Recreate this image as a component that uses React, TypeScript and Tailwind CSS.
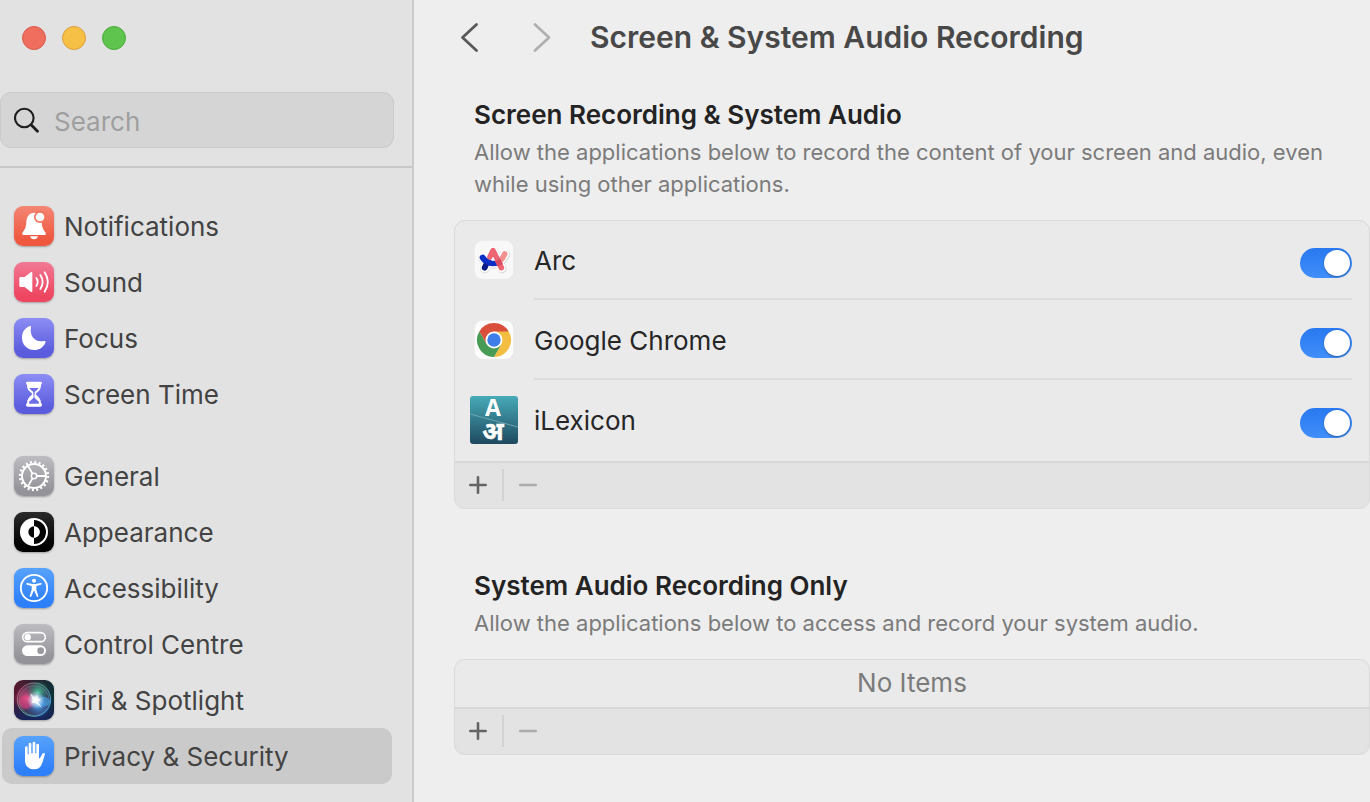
import type { ReactNode } from "react";

type TileProps = { id: string; from: string; to: string; children: ReactNode };

function Tile({ id, from, to, children }: TileProps) {
  return (
    <svg viewBox="0 0 120 120" aria-hidden="true" className="size-10 shrink-0 rounded-[9px] shadow-[0_1px_2px_rgba(0,0,0,0.3)]">
      <defs>
        <linearGradient id={id} x1="0" y1="0" x2="0" y2="1">
          <stop offset="0" stopColor={from} />
          <stop offset="0.85" stopColor={to} />
        </linearGradient>
      </defs>
      <rect width="120" height="120" fill={`url(#${id})`} />
      {children}
    </svg>
  );
}

function NotificationsIcon() {
  return (
    <Tile id="tile-notifications" from="#f48674" to="#ef573f">
      <path fill="#fff" d="M60 20C46 21 38 31 37 47C36 64 34 68 27 77C24 81 23 87 28 87H92C97 87 96 81 93 77C86 68 84 62 83 47Q75 20 60 20Z" />
      <path fill="#fff" d="M48 91H72Q69 100 60 100Q51 100 48 91Z" />
      <circle cx="78" cy="33" r="18" fill="#f1735e" />
      <circle cx="78" cy="33" r="13" fill="#fff" />
    </Tile>
  );
}

function SoundIcon() {
  return (
    <Tile id="tile-sound" from="#f17a95" to="#ee4660">
      <path fill="#fff" d="M20 45H32L50 31Q55 28 55 34V87Q55 92 50 89L32 75H20Q16 75 16 71V49Q16 45 20 45Z" />
      <g fill="none" stroke="#fff" strokeWidth="5.5" strokeLinecap="round">
        <path d="M67 48Q75 60 67 72" />
        <path d="M79 39Q93 60 79 81" />
        <path d="M92 31Q111 60 92 89" />
      </g>
    </Tile>
  );
}

function FocusIcon() {
  return (
    <Tile id="tile-focus" from="#8d8df5" to="#5a5bdd">
      <path fill="#fff" d="M46 25Q51 23 51 27C46 54 62 74 91 69Q97 68 94 74C88 88 76 96 61 96C40 96 24 80 24 59C24 43 33 30 46 25Z" />
    </Tile>
  );
}

function ScreenTimeIcon() {
  return (
    <Tile id="tile-screentime" from="#8d8df5" to="#5a5bdd">
      <path fill="#fff" d="M41 23H79Q84 23 84 27Q84 31 81 32C81 46 75 51 67 57Q65 60 67 63C75 69 81 76 81 88Q84 89 84 93Q84 98 79 98H41Q36 98 36 93Q36 89 39 88C39 76 45 69 53 63Q55 60 53 57C45 51 39 46 39 32Q36 31 36 27Q36 23 41 23Z" />
      <path fill="#6e6fe7" d="M46 42H74Q70 48 62 54L61 61V70L75 84Q76 88 73 89H47Q44 88 45 84L59 70V61L58 54Q50 48 46 42Z" />
      <path fill="#fff" d="M60 61L72 76L73 81L60 70L47 81L48 76Z" />
      <path stroke="#6768e2" strokeWidth="2.5" d="M60 55V73" />
    </Tile>
  );
}

function GeneralIcon() {
  return (
    <Tile id="tile-general" from="#bdbcc1" to="#949399">
      <g fill="none" stroke="#fff">
        <circle cx="60" cy="60" r="42" strokeWidth="7" pathLength="200" strokeDasharray="4.6 5.4" />
        <circle cx="60" cy="60" r="36" strokeWidth="6" />
        <circle cx="60" cy="60" r="8" strokeWidth="4.5" />
        <path strokeWidth="5.5" d="M69 60H94M55 52L43 31M55 68L43 89" />
      </g>
      <circle cx="60" cy="60" r="4" fill="#a19fa5" />
    </Tile>
  );
}

function AppearanceIcon() {
  return (
    <Tile id="tile-appearance" from="#2b2b2b" to="#000000">
      <circle cx="60" cy="60" r="42" fill="#fff" />
      <path fill="#050505" d="M60 24A36 36 0 0 1 60 96V77A17 17 0 0 0 60 43Z" />
      <path fill="#050505" d="M60 43A17 17 0 0 0 60 77Z" />
      <path fill="#fff" d="M60 43A17 17 0 0 1 60 77Z" />
    </Tile>
  );
}

function AccessibilityIcon() {
  return (
    <Tile id="tile-accessibility" from="#57a2fb" to="#2e80fa">
      <circle cx="60" cy="60" r="39.500" fill="none" stroke="#fff" strokeWidth="5.5" />
      <circle cx="60" cy="38" r="6" fill="#fff" />
      <path
        fill="#fff"
        d="M40 45L55 48H65L80 45Q83 45 83 47Q83 49 81 50L67 54V65L73 84Q73 88 70 87Q69 87 68 85L61 69H59L52 85Q51 87 50 87Q47 88 47 84L53 65V54L39 50Q37 49 37 47Q37 45 40 45Z"
      />
    </Tile>
  );
}

function ControlCentreIcon() {
  return (
    <Tile id="tile-control" from="#bdbcc1" to="#949399">
      <rect x="26" y="26" width="68" height="27" rx="13.500" fill="none" stroke="#fff" strokeWidth="5" />
      <circle cx="41" cy="39.500" r="9.500" fill="#fff" />
      <rect x="24" y="64" width="72" height="32" rx="16" fill="#fff" />
      <circle cx="80" cy="80" r="10" fill="#99989d" />
    </Tile>
  );
}

function SiriIcon() {
  return (
    <svg viewBox="0 0 120 120" aria-hidden="true" className="size-10 shrink-0 rounded-[9px] shadow-[0_1px_2px_rgba(0,0,0,0.3)]">
      <defs>
        <linearGradient id="siri-bg" x1="0" y1="0" x2="1" y2="0.2">
          <stop offset="0" stopColor="#5d1730" />
          <stop offset="0.5" stopColor="#2a2535" />
          <stop offset="1" stopColor="#0d3135" />
        </linearGradient>
        <linearGradient id="siri-low" x1="0" y1="0" x2="0" y2="1">
          <stop offset="0.45" stopColor="#1b1d5c" stopOpacity="0" />
          <stop offset="1" stopColor="#17265c" />
        </linearGradient>
        <linearGradient id="siri-ring" x1="0" y1="0.2" x2="1" y2="0.8">
          <stop offset="0" stopColor="#d2587b" />
          <stop offset="0.45" stopColor="#57a58d" />
          <stop offset="1" stopColor="#4a9ae0" />
        </linearGradient>
        <radialGradient id="siri-pink">
          <stop offset="0" stopColor="#ef568b" />
          <stop offset="1" stopColor="#c42d68" stopOpacity="0" />
        </radialGradient>
        <radialGradient id="siri-green">
          <stop offset="0" stopColor="#4bc8a0" />
          <stop offset="1" stopColor="#287b68" stopOpacity="0" />
        </radialGradient>
        <radialGradient id="siri-blue">
          <stop offset="0" stopColor="#54a9f3" />
          <stop offset="1" stopColor="#2458b2" stopOpacity="0" />
        </radialGradient>
        <radialGradient id="siri-glow">
          <stop offset="0" stopColor="#fff" />
          <stop offset="0.3" stopColor="#f5f8ff" stopOpacity="0.85" />
          <stop offset="1" stopColor="#dceeff" stopOpacity="0" />
        </radialGradient>
      </defs>
      <rect width="120" height="120" fill="url(#siri-bg)" />
      <rect width="120" height="120" fill="url(#siri-low)" />
      <circle cx="60" cy="60" r="49" fill="#4c4a66" opacity="0.65" />
      <circle cx="38" cy="55" r="40" fill="url(#siri-pink)" />
      <circle cx="72" cy="37" r="36" fill="url(#siri-green)" />
      <circle cx="74" cy="76" r="40" fill="url(#siri-blue)" />
      <ellipse cx="36" cy="66" rx="22" ry="20" fill="#dd4382" opacity="0.55" />
      <ellipse cx="86" cy="65" rx="22" ry="15" fill="#4cacf0" opacity="0.6" />
      <g fill="none" stroke="url(#siri-ring)">
        <circle cx="60" cy="59" r="50" strokeWidth="3" />
        <circle cx="61" cy="62" r="45" strokeWidth="2" opacity="0.8" />
      </g>
      <circle cx="65" cy="60" r="27" fill="url(#siri-glow)" />
      <path fill="#fff" d="M48 40L63 52L70 43L71 54L82 60L71 64L84 84L63 68L52 70L56 59Z" opacity="0.7" />
    </svg>
  );
}

function PrivacyIcon() {
  return (
    <Tile id="tile-privacy" from="#57a2fb" to="#2e80fa">
      <path
        fill="#fff"
        d="M33 35Q33 31 37 31Q41 31 41 35V55H44V24Q44 20 48 20Q52 20 52 24V52H56V21Q56 17 60 17Q64 17 64 21V52H67V27Q67 23 71 23Q75 23 75 27V68Q80 66 83 57Q86 50 90 51Q94 52 92 57L85 80Q79 100 60 100Q47 100 40 92Q33 86 33 73Z"
      />
    </Tile>
  );
}

function ArcLogo() {
  return (
    <svg viewBox="0 0 120 120" aria-hidden="true" className="size-10">
      <rect x="1" y="1" width="118" height="117" rx="25" fill="#f8f8f8" stroke="#e3e3e3" strokeWidth="1.5" />
      <g fill="none" strokeLinecap="round" strokeLinejoin="round">
        <path stroke="#d9d9d9" strokeWidth="28" d="M26 55Q34 70 58 72Q84 68 94 44M32 86L58 34L84 86" />
        <path stroke="#fff" strokeWidth="26" d="M26 53Q34 69 58 70Q84 66 92 42M32 84L57 32L82 84" />
        <path stroke="#f3918f" strokeWidth="17" d="M76 64Q87 56 92 42" />
        <path stroke="#0b1a86" strokeWidth="17" d="M32 83L38 70" />
        <path stroke="#0d2ec4" strokeWidth="18" d="M26 53Q36 69 57 70Q64 70 70 68" />
        <path stroke="#ee6674" strokeWidth="17" d="M48 51L57 32L82 83" />
        <path stroke="#0b1a86" strokeWidth="16" d="M32 83L34 79" />
        <path stroke="#d84c62" strokeWidth="17" strokeLinecap="butt" d="M71 60L79 76" />
      </g>
      <path fill="#fff" d="M57 50L51 61Q58 64 63 61Z" />
    </svg>
  );
}

function ChromeLogo() {
  return (
    <svg viewBox="0 0 120 120" aria-hidden="true" className="size-10">
      <rect x="1" y="1" width="118" height="117" rx="25" fill="#fdfdfd" stroke="#e3e3e3" strokeWidth="1.5" />
      <path fill="#d94f3b" d="M60 60L15.800 34.500A51 51 0 0 1 104.200 34.500Z" />
      <path fill="#d94f3b" d="M15.800 34.500L38 73L60 34.500Z" />
      <path fill="#f3bd42" d="M60 34.500H104.200A51 51 0 0 1 60 111L82 73Z" />
      <path fill="#479b55" d="M15.800 34.500A51 51 0 0 0 60 111L82 73H38Z" />
      <circle cx="60" cy="60" r="25.500" fill="#fff" />
      <circle cx="60" cy="60" r="20" fill="#3f7ee8" />
    </svg>
  );
}

function LexiconLogo() {
  return (
    <svg viewBox="0 0 48 48" aria-hidden="true" className="size-12 overflow-visible">
      <defs>
        <linearGradient id="lexicon-bg" x1="0" y1="0" x2="0" y2="1">
          <stop offset="0" stopColor="#47abb8" />
          <stop offset="1" stopColor="#1f4960" />
        </linearGradient>
      </defs>
      <rect width="48" height="48" rx="3" fill="url(#lexicon-bg)" />
      <path d="M0 18L48 31" stroke="#78aeb7" strokeWidth="0.8" />
      <g fill="#fff" fontWeight="700" textAnchor="middle">
        <text x="23" y="20" fontSize="23" className="font-['Open_Sans',sans-serif]">A</text>
        <text x="23" y="44" fontSize="25" stroke="#fff" strokeWidth="0.5" className="font-['Noto_Sans_Devanagari','Noto_Sans',sans-serif]">अ</text>
      </g>
    </svg>
  );
}

type NavItem = { label: string; icon: ReactNode; active?: boolean };

const groups: NavItem[][] = [
  [
    { label: "Notifications", icon: <NotificationsIcon /> },
    { label: "Sound", icon: <SoundIcon /> },
    { label: "Focus", icon: <FocusIcon /> },
    { label: "Screen Time", icon: <ScreenTimeIcon /> },
  ],
  [
    { label: "General", icon: <GeneralIcon /> },
    { label: "Appearance", icon: <AppearanceIcon /> },
    { label: "Accessibility", icon: <AccessibilityIcon /> },
    { label: "Control Centre", icon: <ControlCentreIcon /> },
    { label: "Siri & Spotlight", icon: <SiriIcon /> },
    { label: "Privacy & Security", icon: <PrivacyIcon />, active: true },
  ],
];

const apps = [
  { id: "arc", label: "Arc", icon: <ArcLogo /> },
  { id: "chrome", label: "Google Chrome", icon: <ChromeLogo /> },
  { id: "ilexicon", label: "iLexicon", icon: <LexiconLogo /> },
];

function Sidebar() {
  return (
    <aside className="flex w-[414px] shrink-0 flex-col border-r-2 border-[#cbcbcb] bg-[#e2e2e2]">
      <div className="flex gap-4 px-[22px] pt-[26px]">
        <button aria-label="Close" className="size-6 rounded-full border border-[#d9594b] bg-[#ef6e5e]" />
        <button aria-label="Minimise" className="size-6 rounded-full border border-[#dba03a] bg-[#f6bf46]" />
        <button aria-label="Zoom" className="size-6 rounded-full border border-[#4bac38] bg-[#5ec44e]" />
      </div>
      <div className="mt-[42px] border-b-2 border-[#c9c9c9] pr-[18px] pb-[18px]">
        <label className="flex h-14 items-center gap-3 rounded-[11px] border border-[#cacaca] bg-[#d5d5d5] pl-[13px]">
          <svg viewBox="0 0 28 28" aria-hidden="true" className="size-7 shrink-0" fill="none" stroke="#1d1d1d" strokeLinecap="round">
            <circle cx="10.300" cy="12" r="9.300" strokeWidth="2.100" />
            <path d="M17.300 19L23.500 25.200" strokeWidth="2.800" />
          </svg>
          <input
            type="search"
            aria-label="Search"
            placeholder="Search"
            className="w-full min-w-0 bg-transparent pt-[2px] text-[26px] outline-none placeholder:text-[#9f9f9f]"
          />
        </label>
      </div>
      <nav className="flex flex-col gap-[26px] pt-[30px] pr-5 pb-4 pl-[2px]">
        {groups.map((group, index) => (
          <ul key={index}>
            {group.map((item) => (
              <li key={item.label}>
                <a
                  href="#"
                  aria-current={item.active ? "page" : undefined}
                  className={
                    item.active
                      ? "flex h-14 items-center gap-[10px] rounded-[10px] bg-[#cacaca] pl-3 text-[26px]"
                      : "flex h-14 items-center gap-[10px] rounded-[10px] pl-3 text-[26px]"
                  }
                >
                  {item.icon}
                  {item.label}
                </a>
              </li>
            ))}
          </ul>
        ))}
      </nav>
    </aside>
  );
}

function ListFooter() {
  return (
    <div className="flex h-12 items-center border-t-2 border-[#d8d8d8] bg-[#e3e3e3] pb-[2px]">
      <button aria-label="Add" className="flex h-8 w-[50px] items-center justify-center border-r-2 border-[#d3d3d3]">
        <svg viewBox="0 0 18 18" className="size-[18px]" fill="none" stroke="#646464" strokeWidth="2.600" strokeLinecap="round">
          <path d="M9 1.300V16.700M1.300 9H16.700" />
        </svg>
      </button>
      <button aria-label="Remove" disabled className="flex h-8 w-12 items-center justify-center">
        <svg viewBox="0 0 18 18" className="size-[18px]" fill="none" stroke="#aaaaaa" strokeWidth="2.600" strokeLinecap="round">
          <path d="M1.300 9H16.700" />
        </svg>
      </button>
    </div>
  );
}

function SectionHeading({ title, text }: { title: string; text: string }) {
  return (
    <div className="pr-8 pl-5">
      <h2 className="text-[26px] leading-[42px] font-semibold text-[#232323]">{title}</h2>
      <p className="text-[22px] leading-8 text-[#7b7b7b]">{text}</p>
    </div>
  );
}

function Card({ children }: { children: ReactNode }) {
  return (
    <div className="mt-5 overflow-hidden rounded-[11px] bg-[#eaeaea] outline outline-1 -outline-offset-1 outline-[#dadada]">
      {children}
    </div>
  );
}

export default function App() {
  return (
    <div className="flex min-h-screen bg-[#eeeeee] font-[Inter,sans-serif] text-[#434343]">
      <Sidebar />
      <main className="min-w-0 flex-1 pl-10">
        <header className="flex h-[75px] items-center">
          <button aria-label="Back" className="flex w-8 justify-center">
            <svg viewBox="0 0 20 32" className="h-8 w-5" fill="none" stroke="#595959" strokeWidth="2.800" strokeLinecap="round" strokeLinejoin="round">
              <path d="M16.500 2.500L2.500 15.500L16.500 28.500" />
            </svg>
          </button>
          <button aria-label="Forward" disabled className="ml-10 flex w-8 justify-center">
            <svg viewBox="0 0 20 32" className="h-8 w-5" fill="none" stroke="#b0b0b0" strokeWidth="2.800" strokeLinecap="round" strokeLinejoin="round">
              <path d="M3 2.500L17 15.500L3 28.500" />
            </svg>
          </button>
          <h1 className="ml-8 text-[30px] font-semibold text-[#484848]">Screen &amp; System Audio Recording</h1>
        </header>

        <section className="pt-[19px]">
          <SectionHeading
            title="Screen Recording & System Audio"
            text="Allow the applications below to record the content of your screen and audio, even while using other applications."
          />
          <Card>
            <ul className="pb-px">
              {apps.map((app) => (
                <li key={app.id} className="group flex h-20 pr-[18px]">
                  <span className="flex w-20 shrink-0 items-center justify-center">{app.icon}</span>
                  <div className="flex flex-1 items-center justify-between border-b-2 border-[#dddddd] pt-[2px] group-last:border-transparent">
                    <label htmlFor={app.id} className="text-[26px] text-[#262626]">
                      {app.label}
                    </label>
                    <input
                      id={app.id}
                      type="checkbox"
                      role="switch"
                      defaultChecked
                      className="mt-[6px] flex h-[30px] w-[52px] appearance-none items-center rounded-full bg-[#c9c9c9] px-[2px] before:size-[26px] before:rounded-full before:bg-white before:shadow-[0_1px_2px_rgba(0,0,0,0.35)] checked:justify-end checked:bg-linear-to-b checked:from-[#2878f0] checked:to-[#418ffa]"
                    />
                  </div>
                </li>
              ))}
            </ul>
            <ListFooter />
          </Card>
        </section>

        <section className="pt-14">
          <SectionHeading
            title="System Audio Recording Only"
            text="Allow the applications below to access and record your system audio."
          />
          <Card>
            <p className="text-center text-[26px] leading-[48px] text-[#7b7b7b]">No Items</p>
            <ListFooter />
          </Card>
        </section>
      </main>
    </div>
  );
}
